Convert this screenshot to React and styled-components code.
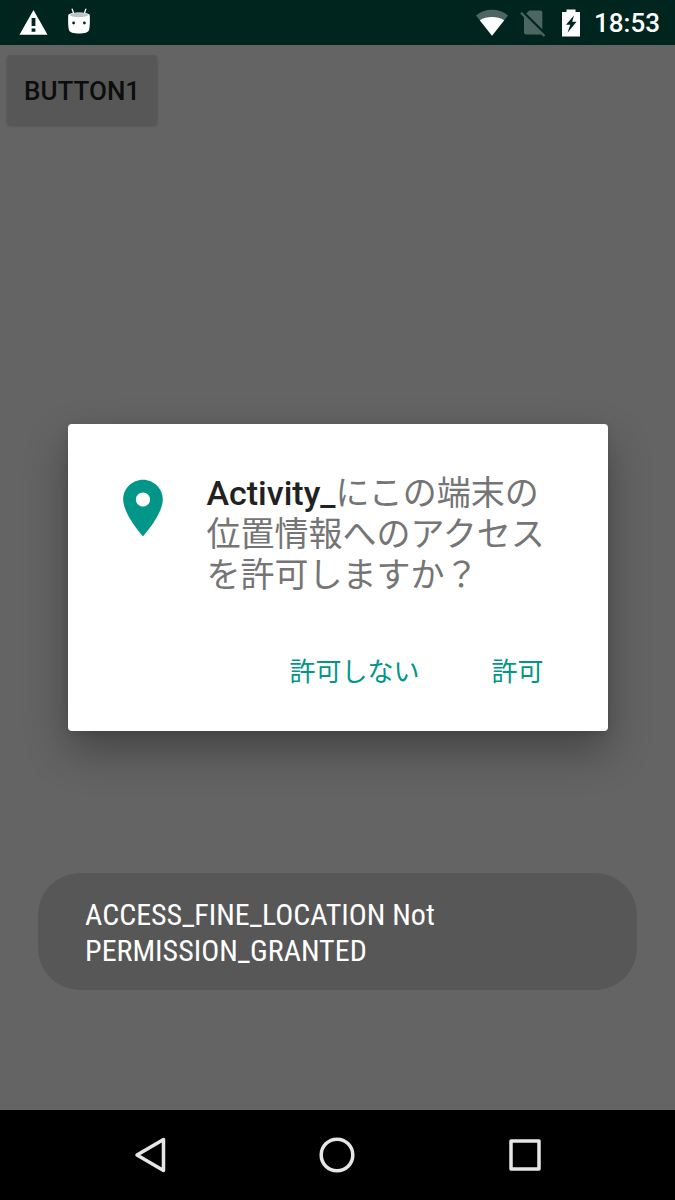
import React, { useState } from "react";
import styled, { createGlobalStyle } from "styled-components";

function WarningIcon() {
  return (
    <svg width="30" height="30" viewBox="0 0 30 30">
      <path d="M14.500 2 .5 26.800h28z" fill="#fff" />
      <path d="M12.600 10h3.800v8h-3.800zM12.600 20.500h3.800v3.300h-3.800z" fill="#00251f" />
    </svg>
  );
}

function DroidIcon() {
  return (
    <svg width="24" height="32" viewBox="0 0 24 32">
      <path
        d="M5.200 2.200 6.800 7M18.800 2.200 17.200 7"
        stroke="#fff"
        strokeWidth="1.300"
        strokeLinecap="round"
      />
      <path
        d="M1.200 8.500C1.200 6.600 6 5.600 12 5.600s10.800 1 10.800 2.900c.2 6 .1 10.500-.6 14-.6 3-4.700 4-10.200 4s-9.600-1-10.200-4C1.100 19 1 14.500 1.200 8.500z"
        fill="#fff"
      />
      <ellipse cx="12" cy="8" rx="9.200" ry="2.200" fill="#bcc6c4" />
      <circle cx="6.600" cy="16" r="1.400" fill="#00251f" />
      <circle cx="17.400" cy="16" r="1.400" fill="#00251f" />
    </svg>
  );
}

function WifiIcon() {
  return (
    <svg width="32" height="28" viewBox="0 0 32 28">
      <path d="M16 26.800 0 6.500C4.500 2.800 10 .8 16 .8s11.500 2 16 5.700z" fill="#4d6662" />
      <path d="M16 26.800 3.800 11.300C7.500 8.900 11.500 7.900 16 7.900s8.500 1 12.200 3.400z" fill="#fff" />
    </svg>
  );
}

function NoSimIcon() {
  return (
    <svg width="30" height="28" viewBox="0 0 30 28" fill="#4d6662">
      <path d="M6.300 4.500 9.300 1.600h11c1.200 0 2 .8 2 2v16.700z" />
      <path d="M4 7 21.700 25.500H6c-1.200 0-2-.8-2-2z" />
      <path d="M1 3.800 24.500 27" stroke="#4d6662" strokeWidth="2.200" fill="none" />
    </svg>
  );
}

function BatteryIcon() {
  return (
    <svg width="18" height="28" viewBox="0 0 18 28">
      <path d="M4.500 0.500h9v2.500h4.500v24.500H0V3h4.500z" fill="#fff" />
      <path d="M12 6.500 4 15.800h4.300L5.500 23.800l9-11h-4.300z" fill="#00251f" />
    </svg>
  );
}

function PlaceIcon() {
  return (
    <svg width="68" height="70" viewBox="0 -0.350 24 24.700" fill="#009688">
      <path d="M12 2C8.130 2 5 5.130 5 9c0 5.250 7 13 7 13s7-7.750 7-13c0-3.870-3.130-7-7-7zm0 9.500c-1.380 0-2.500-1.120-2.500-2.500s1.120-2.500 2.500-2.500 2.500 1.120 2.500 2.500-1.120 2.500-2.500 2.500z" />
    </svg>
  );
}

function App() {
  const [open, setOpen] = useState(true);

  return (
    <>
      <GlobalStyle />
      <Screen>
        <StatusBar>
          <Notifications>
            <WarningIcon />
            <DroidIcon />
          </Notifications>
          <SystemIcons>
            <WifiIcon />
            <NoSimIcon />
            <BatteryIcon />
            <Clock>18:53</Clock>
          </SystemIcons>
        </StatusBar>
        <Content>
          <RaisedButton onClick={() => setOpen(true)}>Button1</RaisedButton>
          {open && (
            <Overlay>
              <Dialog role="dialog" aria-labelledby="permission-message">
                <DialogBody>
                  <PlaceIcon />
                  <Message id="permission-message">
                    <strong>Activity_</strong>にこの端末の位置情報へのアクセスを許可しますか？
                  </Message>
                </DialogBody>
                <DialogActions>
                  <FlatButton onClick={() => setOpen(false)}>許可しない</FlatButton>
                  <FlatButton onClick={() => setOpen(false)}>許可</FlatButton>
                </DialogActions>
              </Dialog>
            </Overlay>
          )}
          <Toast role="status">
            ACCESS_FINE_LOCATION Not PERMISSION_GRANTED
          </Toast>
        </Content>
        <NavBar>
          <NavButton aria-label="Back">
            <svg width="36" height="40" viewBox="0 0 36 40">
              <path d="M31.500 4.500v31L5 20z" />
            </svg>
          </NavButton>
          <NavButton aria-label="Home">
            <svg width="36" height="40" viewBox="0 0 36 40">
              <circle cx="18" cy="20" r="15.800" />
            </svg>
          </NavButton>
          <NavButton aria-label="Recent apps">
            <svg width="36" height="40" viewBox="0 0 36 40">
              <rect x="4" y="6" width="28" height="28" />
            </svg>
          </NavButton>
        </NavBar>
      </Screen>
    </>
  );
}

export default App;

const GlobalStyle = createGlobalStyle`
  * {
    box-sizing: border-box;
  }
  body {
    margin: 0;
    font-family: Roboto, "Noto Sans CJK JP", sans-serif;
  }
  button {
    font-family: inherit;
    border: none;
    cursor: pointer;
  }
  svg {
    display: block;
    flex-shrink: 0;
  }
`;
const Screen = styled.div`
  display: flex;
  flex-direction: column;
  min-height: 100vh;
  background: #646464;
`;
const StatusBar = styled.header`
  display: flex;
  align-items: center;
  justify-content: space-between;
  height: 45px;
  padding: 0 15px 0 19px;
  background: #00251f;
`;
const Notifications = styled.div`
  display: flex;
  align-items: center;
  gap: 18px;
`;
const SystemIcons = styled.div`
  display: flex;
  align-items: center;
  gap: 12px;
`;
const Clock = styled.time`
  padding-left: 2px;
  color: #fff;
  font-size: 26px;
  font-weight: 500;
  line-height: 32px;
`;
const Content = styled.main`
  position: relative;
  flex: 1;
  padding: 10px 7px;
`;
const RaisedButton = styled.button`
  height: 70px;
  padding: 1px 17px 0;
  border-radius: 4px;
  background: #575757;
  color: #0d0d0d;
  font-size: 26px;
  font-weight: 500;
  text-transform: uppercase;
  box-shadow: 0 1px 3px rgba(0, 0, 0, 0.2);
`;
const Overlay = styled.div`
  position: absolute;
  inset: 0;
  display: flex;
  align-items: center;
  justify-content: center;
`;
const Dialog = styled.section`
  width: 80%;
  padding: 49px 30px 28px 41px;
  border-radius: 4px;
  background: #fff;
  box-shadow: 0 20px 44px rgba(0, 0, 0, 0.32), 0 2px 8px rgba(0, 0, 0, 0.1);
`;
const DialogBody = styled.div`
  display: flex;
  align-items: flex-start;
  gap: 30px;
  padding-right: 15px;
`;
const Message = styled.p`
  flex: 1;
  margin: 0;
  color: #757575;
  font-size: 34px;
  line-height: 41px;
  strong {
    color: #212121;
    font-weight: 500;
  }
`;
const DialogActions = styled.div`
  display: flex;
  justify-content: flex-end;
  gap: 20px;
  margin-top: 39px;
`;
const FlatButton = styled.button`
  min-width: 120px;
  height: 68px;
  padding: 0 18px;
  background: transparent;
  color: #009688;
  font-size: 26px;
`;
const Toast = styled.div`
  position: absolute;
  left: 38px;
  right: 38px;
  bottom: 120px;
  padding: 24px 47px 21px;
  border-radius: 42px;
  background: #575757;
  color: #fff;
  font-family: "Roboto Condensed", Roboto, sans-serif;
  font-size: 30px;
  line-height: 36px;
`;
const NavBar = styled.nav`
  display: grid;
  grid-template-columns: repeat(3, 1fr);
  height: 90px;
  padding: 0 56px;
  background: #000;
`;
const NavButton = styled.button`
  display: flex;
  align-items: center;
  justify-content: center;
  background: transparent;
  svg {
    fill: none;
    stroke: #e6e6e6;
    stroke-width: 3.5;
    stroke-linejoin: round;
  }
`;
